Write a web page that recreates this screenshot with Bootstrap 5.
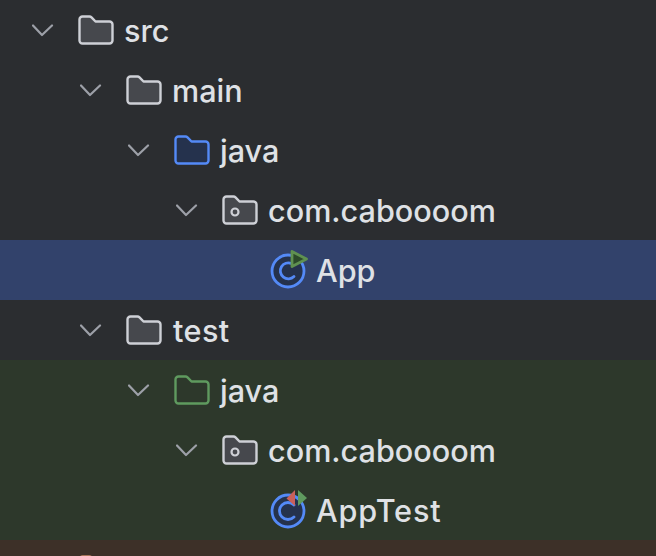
<!DOCTYPE html>
<html lang="en">
<head>
<meta charset="utf-8">
<title>Project tree</title>
<link href="https://cdn.jsdelivr.net/npm/bootstrap@5.3.0/dist/css/bootstrap.min.css" rel="stylesheet">
<style>
html,body{height:556px;overflow:hidden;background:#2b2d30;}
body{font-family:Inter,"Liberation Sans",sans-serif;}
.tree-list{border-radius:0;}
.tree-row{height:60px;padding:0 0 0 32px;border:0;background:#2b2d30;color:#dfe1e5;font-size:30.600px;font-weight:500;line-height:60px;}
.lbl{padding-top:2px;}
.lbl-test{letter-spacing:.4px;margin-left:1px;}
.lbl-apptest{letter-spacing:.85px;}
.lv1{padding-left:80px;}
.lv2{padding-left:128px;}
.lv3{padding-left:176px;}
.lv4{padding-left:270px;}
.row-sel{background:#32426b;}
.row-green{background:#2d382b;}
.row-brown{background:#3d3028;height:16px;overflow:hidden;}
.chev{width:46px;height:60px;flex:none;fill:none;stroke:#9da0a8;stroke-width:2.200;stroke-linecap:round;stroke-linejoin:round;}
.ficon{width:36px;height:30px;flex:none;margin-right:10px;}
.cicon{width:38px;height:40px;flex:none;margin-right:8px;}
.fold{fill:#46484d;stroke:#ced0d6;stroke-width:2.400;stroke-linejoin:round;}
.fold-blue{fill:#25324d;stroke:#548af7;}
.fold-green{fill:#2d382b;stroke:#5f9a5f;}
.fold-orange{fill:#45322b;stroke:#c98a6a;}
.pkg-dot{fill:none;stroke:#ced0d6;stroke-width:2.200;}
.cls-ring{fill:#25324d;stroke:#548af7;stroke-width:2.800;}
.cls-c{fill:none;stroke:#548af7;stroke-width:2.800;stroke-linecap:round;}
.run-tri{fill:#2c4a2a;stroke:#5f9150;stroke-width:2.800;stroke-linejoin:round;}
.tri-red{fill:#c9605a;}
.tri-green{fill:#5f9a5f;}
.peek{margin-top:14.500px;}
.spacer{width:46px;flex:none;}
</style>
</head>
<body>
<svg width="0" height="0" class="position-absolute">
  <defs>
    <path id="fp" d="M4.500 1.500H11.500A3 3 0 0 1 13.500 2.300L17.500 6.500H31.500A3 3 0 0 1 34.500 9.500V25.500A3 3 0 0 1 31.500 28.500H4.500A3 3 0 0 1 1.500 25.500V4.500A3 3 0 0 1 4.500 1.500Z"/>
    <symbol id="chevd" viewBox="0 0 46 60"><path d="M1 25.500L10 35L20 25.500"/></symbol>
  </defs>
</svg>
<div class="list-group list-group-flush tree-list">
  <div class="list-group-item tree-row d-flex align-items-center">
    <svg class="chev"><use href="#chevd"/></svg>
    <svg class="ficon" viewBox="0 0 36 30"><use href="#fp" class="fold"/></svg><span class="lbl">src</span>
  </div>
  <div class="list-group-item tree-row lv1 d-flex align-items-center">
    <svg class="chev"><use href="#chevd"/></svg>
    <svg class="ficon" viewBox="0 0 36 30"><use href="#fp" class="fold"/></svg><span class="lbl">main</span>
  </div>
  <div class="list-group-item tree-row lv2 d-flex align-items-center">
    <svg class="chev"><use href="#chevd"/></svg>
    <svg class="ficon" viewBox="0 0 36 30"><use href="#fp" class="fold fold-blue"/></svg><span class="lbl">java</span>
  </div>
  <div class="list-group-item tree-row lv3 d-flex align-items-center">
    <svg class="chev"><use href="#chevd"/></svg>
    <svg class="ficon" viewBox="0 0 36 30"><use href="#fp" class="fold"/><circle class="pkg-dot" cx="13" cy="17" r="3.500"/></svg><span class="lbl">com.caboooom</span>
  </div>
  <div class="list-group-item tree-row lv4 row-sel d-flex align-items-center">
    <svg class="cicon" viewBox="0 0 38 40">
      <circle class="cls-ring" cx="18" cy="21" r="16"/>
      <path class="cls-c" d="M24 26.500A8 8 0 1 1 21.500 13.500"/>
      <path class="run-tri" d="M22 1.500L36.500 9L22 16.500Z"/>
    </svg><span class="lbl">App</span>
  </div>
  <div class="list-group-item tree-row lv1 d-flex align-items-center">
    <svg class="chev"><use href="#chevd"/></svg>
    <svg class="ficon" viewBox="0 0 36 30"><use href="#fp" class="fold"/></svg><span class="lbl lbl-test">test</span>
  </div>
  <div class="list-group-item tree-row lv2 row-green d-flex align-items-center">
    <svg class="chev"><use href="#chevd"/></svg>
    <svg class="ficon" viewBox="0 0 36 30"><use href="#fp" class="fold fold-green"/></svg><span class="lbl">java</span>
  </div>
  <div class="list-group-item tree-row lv3 row-green d-flex align-items-center">
    <svg class="chev"><use href="#chevd"/></svg>
    <svg class="ficon" viewBox="0 0 36 30"><use href="#fp" class="fold"/><circle class="pkg-dot" cx="13" cy="17" r="3.500"/></svg><span class="lbl">com.caboooom</span>
  </div>
  <div class="list-group-item tree-row lv4 row-green d-flex align-items-center">
    <svg class="cicon" viewBox="0 0 38 40">
      <circle class="cls-ring" cx="18" cy="21" r="16"/>
      <path class="cls-c" d="M24 27A8.500 8.500 0 1 1 24 15"/>
      <path class="tri-red" d="M16.500 8.500L25 0V16Z"/>
      <path class="tri-green" d="M28 0V16L37 8Z"/>
    </svg><span class="lbl lbl-apptest">AppTest</span>
  </div>
  <div class="list-group-item tree-row row-brown d-flex align-items-start">
    <span class="spacer"></span>
    <svg class="ficon peek" viewBox="0 0 36 30"><use href="#fp" class="fold fold-orange"/></svg>
  </div>
</div>
<script src="https://cdn.jsdelivr.net/npm/bootstrap@5.3.0/dist/js/bootstrap.bundle.min.js"></script>
</body>
</html>
